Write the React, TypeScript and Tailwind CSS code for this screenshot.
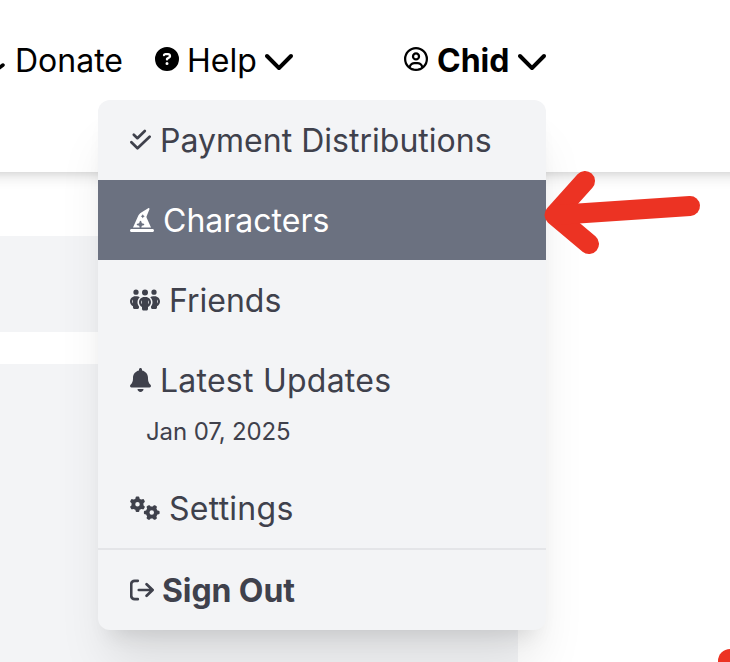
import type { ReactNode } from 'react'
import {
  FaBell,
  FaChevronDown,
  FaCircleQuestion,
  FaGears,
  FaHatWizard,
  FaPeopleGroup,
  FaRegCircleUser
} from 'react-icons/fa6'

function CheckDoubleIcon() {
  return (
    <svg viewBox="0 0 21 24" className="h-6 w-[21px] shrink-0" fill="none" stroke="currentColor" strokeWidth="2.7" strokeLinecap="round" strokeLinejoin="round">
      <path d="M3.8 6.8 7.4 10.2 14.8 3" />
      <path d="M1.4 14.3 7.5 20.3 19.6 8.8" />
    </svg>
  )
}

function SignOutIcon() {
  return (
    <svg viewBox="0 0 24 24" className="h-6 w-6 shrink-0" fill="none" stroke="currentColor" strokeWidth="2.7" strokeLinecap="round" strokeLinejoin="round">
      <path d="M7.8 2.8H4.7a3.5 3.5 0 0 0-3.5 3.5v11.4a3.5 3.5 0 0 0 3.5 3.5h3.1" />
      <path d="M8.8 12h13.6M16.6 6.2l6 5.8-6 5.8" />
    </svg>
  )
}

interface MenuItemProps {
  icon: ReactNode
  label: string
  active?: boolean
  className?: string
}

function MenuItem({ icon, label, active = false, className = 'gap-[9px]' }: MenuItemProps) {
  return (
    <button
      className={`flex h-20 w-full items-center px-8 text-left ${active ? 'bg-[#6b7180] text-white' : 'text-[#3f414c]'} ${className}`}
    >
      {icon}
      <span className="whitespace-nowrap pt-0.5">{label}</span>
    </button>
  )
}

function UserMenu() {
  return (
    <div className="absolute left-[98px] top-[100px] w-[448px] rounded-xl bg-[#f3f4f6] shadow-[0_40px_50px_-10px_rgba(0,0,0,0.1),0_16px_20px_-12px_rgba(0,0,0,0.1)]">
      <MenuItem icon={<CheckDoubleIcon />} label="Payment Distributions" className="gap-[9px] tracking-[0.02px]" />
      <MenuItem icon={<FaHatWizard className="size-6" />} label="Characters" active />
      <MenuItem icon={<FaPeopleGroup className="h-6 w-[30px]" />} label="Friends" />
      <MenuItem icon={<FaBell className="h-6 w-[21px]" />} label="Latest Updates" className="gap-[9px] tracking-[0.24px]" />
      <div className="h-12 pl-12 text-2xl leading-[23px] tracking-[-0.12px] text-[#3f414c]">Jan 07, 2025</div>
      <MenuItem icon={<FaGears className="h-6 w-[30px]" />} label="Settings" className="gap-[9px] tracking-[0.25px]" />
      <div className="h-0.5 bg-[#e4e5e8]" />
      <MenuItem icon={<SignOutIcon />} label="Sign Out" className="gap-2 font-bold tracking-[-0.1px]" />
    </div>
  )
}

function Arrow() {
  return (
    <svg viewBox="0 0 160 90" className="absolute left-[542px] top-[168px] h-[90px] w-40" fill="none" stroke="#ec3323" strokeWidth="20" strokeLinecap="round" strokeLinejoin="round">
      <path d="M43 13 12.5 47 47 76" />
      <path d="M14 47 148 38" />
    </svg>
  )
}

export default function App() {
  return (
    <div className="relative h-[662px] w-[730px] overflow-hidden bg-white font-['Inter',sans-serif] text-[32px] leading-10">
      <header className="relative z-10 -mx-5 h-[172px] bg-white px-5 pt-[39px] text-black shadow-[0_8px_12px_-2px_rgba(0,0,0,0.1),0_4px_8px_-4px_rgba(0,0,0,0.1)]">
        <nav className="flex items-center">
          <svg viewBox="0 0 6 24" className="h-6 w-1.5" fill="none" stroke="currentColor" strokeWidth="3.5" strokeLinecap="round">
            <path d="M-1 20 3 17" />
          </svg>
          <span className="ml-[9px] w-[107px] whitespace-nowrap pt-0.5">Donate</span>
          <div className="ml-[33px] flex w-[138px] items-center">
            <FaCircleQuestion className="-mt-0.5 size-6 shrink-0" />
            <span className="ml-2 mr-auto pt-0.5">Help</span>
            <FaChevronDown className="-mr-0.5 size-8 shrink-0" />
          </div>
          <div className="ml-[111px] flex w-[142px] items-center">
            <FaRegCircleUser className="-mt-0.5 size-6 shrink-0" />
            <span className="ml-[9px] mr-auto pt-0.5 font-bold">Chid</span>
            <FaChevronDown className="-mr-0.5 size-8 shrink-0" />
          </div>
        </nav>
        <div className="absolute left-5 top-0">
          <UserMenu />
        </div>
      </header>
      <main className="pt-16">
        <div className="h-24 w-[518px] bg-[#f3f4f6]" />
        <div className="mt-8 h-[298px] w-[518px] bg-[#f3f4f6]" />
      </main>
      <div className="absolute inset-0 z-20">
        <Arrow />
        <div className="absolute left-[718px] top-[649px] size-6 rounded-full bg-[#ec3323]" />
      </div>
    </div>
  )
}
